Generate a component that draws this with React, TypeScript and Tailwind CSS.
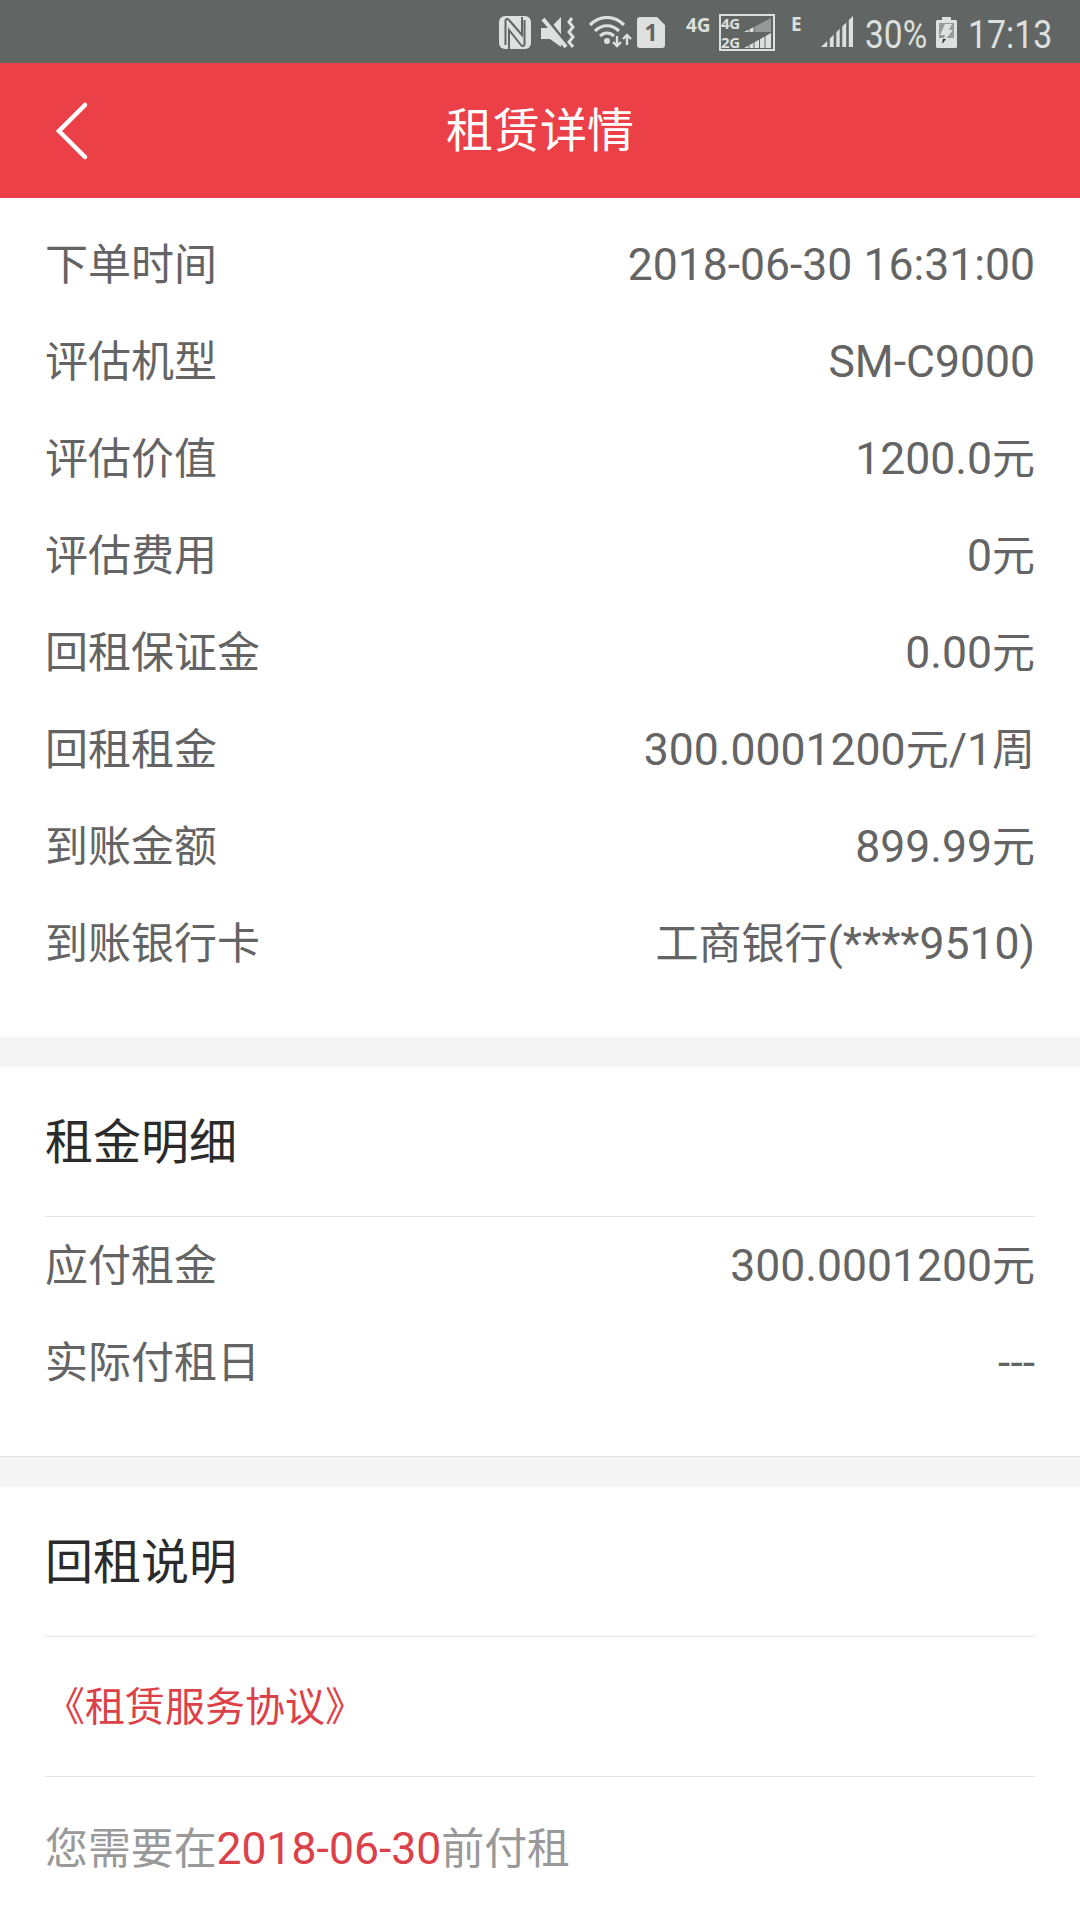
import React from 'react';

interface RowData {
  label: string;
  value: string;
}

const orderRows: RowData[] = [
  { label: '下单时间', value: '2018-06-30 16:31:00' },
  { label: '评估机型', value: 'SM-C9000' },
  { label: '评估价值', value: '1200.0元' },
  { label: '评估费用', value: '0元' },
  { label: '回租保证金', value: '0.00元' },
  { label: '回租租金', value: '300.0001200元/1周' },
  { label: '到账金额', value: '899.99元' },
  { label: '到账银行卡', value: '工商银行(****9510)' },
];

const rentRows: RowData[] = [
  { label: '应付租金', value: '300.0001200元' },
  { label: '实际付租日', value: '---' },
];

// Chinese runs are set slightly tighter than the digits around them
const MixedText: React.FC<{ text: string }> = ({ text }) => {
  const parts = text.match(/[\u4e00-\u9fff]+|[^\u4e00-\u9fff]+/g) || [];
  return (
    <>
      {parts.map((part, index) =>
        /[\u4e00-\u9fff]/.test(part) ? (
          <span key={index} className="text-[43px]">{part}</span>
        ) : (
          <span key={index} className="text-[44.5px]">{part}</span>
        )
      )}
    </>
  );
};

const DetailRow: React.FC<{ row: RowData }> = ({ row }) => (
  <li className="flex h-[97px] items-center justify-between whitespace-nowrap leading-[60px] text-[#646464]">
    <span><MixedText text={row.label} /></span>
    <span><MixedText text={row.value} /></span>
  </li>
);

const SectionTitle: React.FC<{ title: string }> = ({ title }) => (
  <h2 className="flex h-[150px] items-center border-b border-[#e2e2e2] pt-[2px] text-[48px] leading-[60px] text-[#2b2b2b]">
    {title}
  </h2>
);

const StatusBar: React.FC = () => (
  <div className="flex h-[63px] items-start bg-[#616664] pl-[499px] text-[#dde0de]">
    <svg className="mt-4 h-[33px] w-8 shrink-0" viewBox="0 0 32 33" fill="none">
      <rect width="32" height="33" rx="6" fill="#dde0de" />
      <path d="M6.500 29V5c0-2 2-3 3.500-1L23 19V1" stroke="#616664" strokeWidth="2" />
      <path d="M25.500 4v24c0 2-2 3-3.500 1L10 14v19" stroke="#616664" strokeWidth="2" />
    </svg>
    <svg className="ml-[10px] mt-4 h-[33px] w-[35px] shrink-0" viewBox="0 0 35 33">
      <path d="M0 12h9L20 1v30L9 23H0z" fill="#dde0de" />
      <path d="M4 0 27 30" stroke="#616664" strokeWidth="3" />
      <path d="M2 3 25 31" stroke="#dde0de" strokeWidth="4" />
      <path d="m31 2-3 4 4 5-4 5 4 5-4 5 4 5" fill="none" stroke="#dde0de" strokeWidth="3" />
    </svg>
    <svg className="ml-[13px] mt-4 h-[33px] w-[43px] shrink-0" viewBox="0 0 43 33" fill="none" stroke="#dde0de">
      <path d="M1 9c10-10 24-10 34 0M6 15c7-7 17-7 24 0M11 20c4-4 10-4 14 0" strokeWidth="3.200" />
      <circle cx="18" cy="25" r="3" fill="#dde0de" stroke="none" />
      <path d="M28 20v10m-4-4 4 4 4-4M38 29V19m-4 4 4-4 4 4" strokeWidth="2.400" />
    </svg>
    <svg className="ml-[5px] mt-[17px] h-[31px] w-7 shrink-0" viewBox="0 0 28 31">
      <path d="M3 0h17l8 8v20a3 3 0 0 1-3 3H3a3 3 0 0 1-3-3V3a3 3 0 0 1 3-3z" fill="#dde0de" />
      <text x="14" y="24" textAnchor="middle" fill="#616664" className="font-['Open_Sans'] text-[23px] font-bold">1</text>
    </svg>
    <span className="ml-[21px] mt-[14px] w-[33px] font-['Open_Sans'] text-[19px] font-bold leading-[22px]">4G</span>
    <div className="mt-[14px] flex h-[37px] w-14 shrink-0 border-2 border-[#dde0de]">
      <div className="flex w-[22px] flex-col font-['Open_Sans'] text-[15px] font-bold leading-[15px] tracking-[-0.3px]">
        <span>4G</span>
        <span className="mt-[4px]">2G</span>
      </div>
      <svg className="h-[33px] w-[29px] shrink-0" viewBox="0 0 29 33">
        <path d="M1 16 28 2v14z" fill="#969b99" />
        <path d="M1 16l10-5v5zM1 32l27-15v15z" fill="#dde0de" />
        <path d="M6 10v6M11 9v7M6 25v8M11 23v10M16.500 20v13M22 18v15" stroke="#616664" />
      </svg>
    </div>
    <span className="ml-[16px] mt-[13px] w-[30px] font-['Open_Sans'] text-[19px] font-bold leading-[22px]">E</span>
    <svg className="mt-4 h-8 w-8 shrink-0" viewBox="0 0 32 32">
      <path d="M0 31 32 0v31z" fill="#dde0de" />
      <path d="M7.500 0v32M14 0v32M20 0v32M26.500 0v32" stroke="#616664" strokeWidth="2.600" />
    </svg>
    <span className="ml-[12px] mt-[12px] w-[71px] origin-left scale-x-[0.87] text-[38.5px] leading-[46px]">30%</span>
    <svg className="mt-[17px] h-8 w-[22px] shrink-0" viewBox="0 0 22 32">
      <path d="M6 0h9v3h5l1 1v26l-1 1H1l-1-1V4l1-1h5z" fill="#dde0de" />
      <path d="M3 6h15v15H3z" fill="#969b99" />
      <path d="M9 7h7l-3 6h4L6 27l3-9H4z" fill="#dde0de" />
      <path d="M7 22h3l-4 5z" fill="#222" />
    </svg>
    <span className="ml-[10px] mt-[12px] origin-left scale-x-[0.88] text-[38.5px] leading-[46px]">17:13</span>
  </div>
);

const NavBar: React.FC = () => (
  <header className="relative flex h-[135px] items-center justify-center bg-[#ec4048] text-white">
    <button className="absolute left-[54px] top-[38px]" aria-label="返回">
      <svg className="h-[60px] w-[35px]" viewBox="0 0 35 60" fill="none">
        <path d="M31 4 5 30 31 56" stroke="white" strokeWidth="4.500" strokeLinecap="round" />
      </svg>
    </button>
    <h1 className="text-[47px] leading-[60px]">租赁详情</h1>
  </header>
);

const App: React.FC = () => {
  return (
    <div
      lang="zh-CN"
      className="h-[1920px] w-[1080px] overflow-hidden bg-white font-[Roboto,'Noto_Sans_CJK_SC',sans-serif]"
    >
      <StatusBar />
      <NavBar />
      <ul className="px-[45px] pb-[40px] pt-[23px]">
        {orderRows.map((row) => <DetailRow key={row.label} row={row} />)}
      </ul>
      <div className="h-[30px] bg-[#f4f4f4]" />
      <section className="px-[45px] pb-[40px]">
        <SectionTitle title="租金明细" />
        <ul className="pt-[5px]">
          {rentRows.map((row) => <DetailRow key={row.label} row={row} />)}
        </ul>
      </section>
      <div className="h-[31px] border-t border-[#e2e2e2] bg-[#f4f4f4]" />
      <section className="px-[45px]">
        <SectionTitle title="回租说明" />
        <a className="flex h-[140px] items-center border-b border-[#e2e2e2] pt-[2px] text-[40px] leading-[60px] text-[#dc4048]">
          《租赁服务协议》
        </a>
        <p className="flex h-[143px] items-center text-[42.9px] leading-[60px] text-[#999]">
          您需要在<span className="text-[44.5px] text-[#dc4048]">2018-06-30</span>前付租
        </p>
      </section>
    </div>
  );
};

export default App;
